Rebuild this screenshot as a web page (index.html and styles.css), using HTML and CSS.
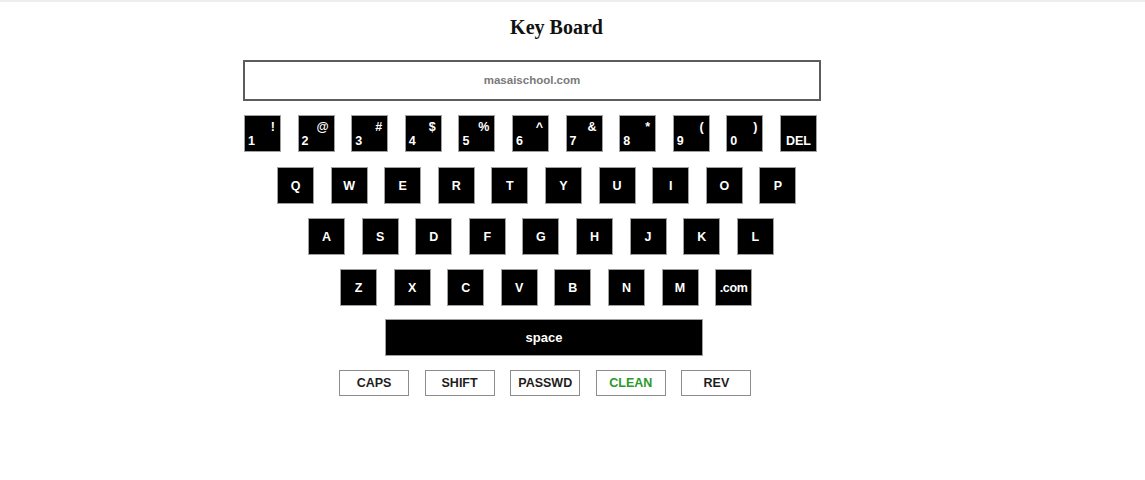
FILE: index.html
```html
<!DOCTYPE html>
<html>
<head>
<meta charset="utf-8">
<title>Key Board</title>
<link rel="stylesheet" href="styles.css">
</head>
<body>
<div class="page">
  <h1 class="title">Key Board</h1>
  <div class="board">
    <div class="display">masaischool.com</div>
    <div class="row row-1">
      <div class="key dual"><span class="sym">!</span><span class="num">1</span></div>
      <div class="key dual"><span class="sym">@</span><span class="num">2</span></div>
      <div class="key dual"><span class="sym">#</span><span class="num">3</span></div>
      <div class="key dual"><span class="sym">$</span><span class="num">4</span></div>
      <div class="key dual"><span class="sym">%</span><span class="num">5</span></div>
      <div class="key dual"><span class="sym">^</span><span class="num">6</span></div>
      <div class="key dual"><span class="sym">&amp;</span><span class="num">7</span></div>
      <div class="key dual"><span class="sym">*</span><span class="num">8</span></div>
      <div class="key dual"><span class="sym">(</span><span class="num">9</span></div>
      <div class="key dual"><span class="sym">)</span><span class="num">0</span></div>
      <div class="key del">DEL</div>
    </div>
    <div class="row row-2">
      <div class="key">Q</div><div class="key">W</div><div class="key">E</div><div class="key">R</div><div class="key">T</div><div class="key">Y</div><div class="key">U</div><div class="key">I</div><div class="key">O</div><div class="key">P</div>
    </div>
    <div class="row row-3">
      <div class="key">A</div><div class="key">S</div><div class="key">D</div><div class="key">F</div><div class="key">G</div><div class="key">H</div><div class="key">J</div><div class="key">K</div><div class="key">L</div>
    </div>
    <div class="row row-4">
      <div class="key">Z</div><div class="key">X</div><div class="key">C</div><div class="key">V</div><div class="key">B</div><div class="key">N</div><div class="key">M</div><div class="key com">.com</div>
    </div>
    <div class="row row-5">
      <div class="key space">space</div>
    </div>
    <div class="row row-6">
      <div class="btn">CAPS</div>
      <div class="btn">SHIFT</div>
      <div class="btn">PASSWD</div>
      <div class="btn clean">CLEAN</div>
      <div class="btn">REV</div>
    </div>
  </div>
</div>
</body>
</html>
```

FILE: styles.css
```css
html, body {
  margin: 0;
  padding: 0;
  background: #fff;
}

body {
  border-top: 2px solid #eeeeee;
}

.page {
  width: 1113px;
  font-family: "Liberation Sans", Arial, sans-serif;
}

.title {
  margin: 13px 0 0;
  font-family: "Liberation Serif", "Times New Roman", serif;
  font-size: 20px;
  line-height: 24px;
  font-weight: bold;
  text-align: center;
  color: #111;
}

.board {
  margin: 21px 0 0 243px;
  width: 578px;
}

.display {
  box-sizing: border-box;
  height: 41px;
  border: 2px solid #5c5c5c;
  padding-bottom: 2px;
  display: flex;
  align-items: center;
  justify-content: center;
  font-size: 11.5px;
  font-weight: bold;
  color: #7a7a7a;
}

.row {
  display: flex;
  gap: 16.6px;
}

.row-1 { margin: 14px 0 0 1px; }
.row-2 { margin: 15px 0 0 34px; }
.row-3 { margin: 14px 0 0 65px; }
.row-4 { margin: 14px 0 0 97px; }
.row-5 { margin: 13px 0 0 142px; }
.row-6 { margin: 14px 0 0 96px; gap: 15.6px; }

.key {
  box-sizing: border-box;
  width: 37px;
  height: 37px;
  background: #000;
  border: 1px solid #a0a0a0;
  color: #fff;
  font-size: 12.5px;
  font-weight: bold;
  display: flex;
  align-items: center;
  justify-content: center;
  flex: none;
}

.key.dual {
  flex-direction: column;
  align-items: stretch;
  justify-content: space-between;
  padding: 4px 5px 3px 3px;
  line-height: 14px;
}

.key.dual .sym {
  text-align: right;
}

.key.dual .num {
  text-align: left;
}

.key.del {
  align-items: flex-end;
  padding-bottom: 3px;
}

.key.com {
  letter-spacing: -0.3px;
}

.key.space {
  width: 318px;
  height: 37px;
  font-size: 13px;
}

.btn {
  box-sizing: border-box;
  width: 70px;
  height: 26px;
  border: 1px solid #8c8c8c;
  background: #fff;
  display: flex;
  align-items: center;
  justify-content: center;
  font-size: 12.5px;
  font-weight: bold;
  color: #1e1e1e;
  flex: none;
}

.btn.clean {
  color: #2a9a2a;
}
```
